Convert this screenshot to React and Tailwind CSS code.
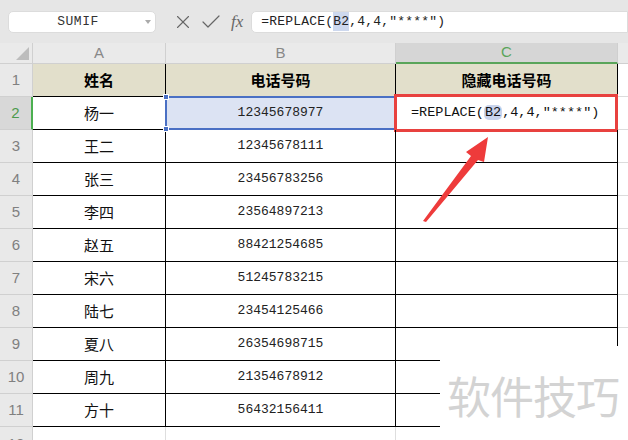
import React from "react";
import { X, Check } from "lucide-react";

const rows = [
  ["杨一", "12345678977"],
  ["王二", "12345678111"],
  ["张三", "23456783256"],
  ["李四", "23564897213"],
  ["赵五", "88421254685"],
  ["宋六", "51245783215"],
  ["陆七", "23454125466"],
  ["夏八", "26354698715"],
  ["周九", "21354678912"],
  ["方十", "56432156411"],
];

const cjk = { fontFamily: '"Noto Sans CJK SC", sans-serif' };
const mono = { fontFamily: '"Liberation Mono", "Noto Sans CJK SC", monospace' };
const arial = { fontFamily: '"Liberation Sans", Arial, sans-serif' };

const RowHead = ({ n, active }) => (
  <div
    className={`flex items-center justify-center border-b border-r text-[15px] ${
      active
        ? "bg-[#d8d8d8] text-[#4d9a4d] border-r-2 border-r-[#4caf50] border-b-[#cfcfcf]"
        : "bg-[#e9e9e9] text-[#808080] border-[#d0d0d0]"
    }`}
    style={arial}
  >
    {n}
  </div>
);

export default function App() {
  return (
    <div className="relative w-[628px] h-[440px] overflow-hidden bg-white">
      {/* toolbar */}
      <div className="h-[43px] bg-[#e6e6e6] flex items-center pl-2">
        <div className="w-[148px] h-[22px] bg-white rounded-[5px] border border-[#dcdcdc] flex items-center relative">
          <span className="flex-1 text-center text-[13px] text-[#333] pr-2 tracking-[0.5px]" style={mono}>
            SUMIF
          </span>
          <span className="absolute right-[4px] top-[8px] w-0 h-0 border-l-[3px] border-r-[3px] border-t-[4px] border-l-transparent border-r-transparent border-t-[#aaa]" />
        </div>
        <div className="flex items-center ml-[16px] gap-[5px] text-[#666]">
          <X size={22} strokeWidth={1.2} />
          <Check size={24} strokeWidth={1.2} />
          <span className="italic text-[17px] text-[#666] ml-[3px]" style={{ fontFamily: '"Liberation Serif", serif' }}>
            fx
          </span>
        </div>
        <div className="ml-[8px] flex-1 h-[22px] bg-white rounded-l-[5px] border border-[#dcdcdc] flex items-center pl-[9px] text-[13px] text-[#222] tracking-[0.2px]" style={mono}>
          =REPLACE(<span className="bg-[#cdd8ee]">B2</span>,4,4,"****")
        </div>
      </div>

      {/* sheet */}
      <div className="grid grid-cols-[33px_133px_230px_222px_1fr] grid-rows-[21px_repeat(12,33px)]">
        {/* column headers */}
        <div className="bg-[#eaeaea] border-b border-r border-[#d0d0d0] flex items-end justify-end p-[3px]">
          <span className="w-0 h-0 border-b-[13px] border-l-[13px] border-b-[#bdbdbd] border-l-transparent" />
        </div>
        <div className="bg-[#eaeaea] border-b border-r border-[#d0d0d0] flex items-center justify-center text-[15px] text-[#888]" style={arial}>A</div>
        <div className="bg-[#eaeaea] border-b border-r border-[#d0d0d0] flex items-center justify-center text-[15px] text-[#888]" style={arial}>B</div>
        <div className="bg-[#d6d6d6] border-b-2 border-b-[#5aa55a] border-r border-r-[#cfcfcf] flex items-center justify-center text-[15px] text-[#5aa55a]" style={arial}>C</div>
        <div className="bg-[#eaeaea] border-b border-[#d0d0d0]" />

        {/* row 1 */}
        <RowHead n={1} />
        <div className="bg-[#e2dfcb] border-b border-r border-black flex items-center justify-center text-[15px] font-bold text-black" style={cjk}>姓名</div>
        <div className="bg-[#e2dfcb] border-b border-r border-black flex items-center justify-center text-[15px] font-bold text-black" style={cjk}>电话号码</div>
        <div className="bg-[#e2dfcb] border-b border-r border-black flex items-center justify-center text-[15px] font-bold text-black" style={cjk}>隐藏电话号码</div>
        <div className="border-b border-[#dcdcdc]" />

        {rows.map(([name, phone], i) => {
          const first = i === 0;
          return (
            <React.Fragment key={name}>
              <RowHead n={i + 2} active={first} />
              <div className="border-b border-r border-black flex items-center justify-center text-[15px] text-[#111]" style={cjk}>
                {name}
              </div>
              <div
                className={`relative border-b border-r border-black flex items-center justify-center text-[13px] text-[#222] ${
                  first ? "bg-[#dce3f3]" : ""
                }`}
                style={mono}
              >
                {phone}
                {first && (
                  <>
                    <span className="absolute -left-[1px] -top-[1px] -right-[1px] bottom-[-1px] border-2 border-[#4a70c4]" />
                    <span className="absolute -left-[3px] -top-[3px] w-[6px] h-[6px] bg-[#4a70c4] border border-white" />
                    <span className="absolute -left-[3px] -bottom-[3px] w-[6px] h-[6px] bg-[#4a70c4] border border-white" />
                  </>
                )}
              </div>
              <div className="relative border-b border-r border-black flex items-center pl-[15px] text-[13.5px] text-[#111]" style={mono}>
                {first && (
                  <>
                    <span>
                      =REPLACE(<span className="bg-[#c9d4ec] rounded-[5px] px-[1px]">B2</span>,4,4,"****")
                    </span>
                    <span className="absolute -left-[2px] -top-[3px] -right-[1px] -bottom-[3px] border-[3px] border-[#e8413f]" />
                  </>
                )}
              </div>
              <div className="border-b border-[#dcdcdc]" />
            </React.Fragment>
          );
        })}

        {/* row 12 */}
        <div className="bg-[#e9e9e9] border-r border-[#d0d0d0] flex items-start justify-center pt-[6px] text-[15px] text-[#808080]" style={arial}>12</div>
        <div className="border-r border-[#dedede]" />
        <div className="border-r border-[#dedede]" />
        <div className="border-r border-[#dedede]" />
        <div />
      </div>

      {/* arrow */}
      <svg className="absolute left-0 top-0 pointer-events-none" width="628" height="440">
        <polygon points="423,221 471,156 466,152 488,137 484,162 478,160 426,222" fill="#ee3b3b" />
      </svg>

      {/* watermark */}
      <div
        className="absolute left-[440px] top-[346px] w-[188px] h-[94px] bg-white flex items-center justify-center pr-[2px] pt-[4px] text-[44px] text-[#d3d3d3] tracking-[-1px]"
        style={cjk}
      >
        软件技巧
      </div>
    </div>
  );
}
